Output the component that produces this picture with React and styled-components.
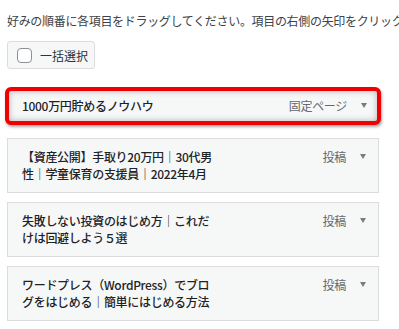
import React from "react";
import styled, { createGlobalStyle } from "styled-components";

const GlobalStyle = createGlobalStyle`
  body {
    margin: 0;
    background: #fff;
    font-family: "Noto Sans CJK JP", "Noto Sans", sans-serif;
    color: #1d2327;
  }
`;

const Page = styled.div`
  width: 399px;
  height: 329px;
  overflow: hidden;
  padding: 11px 0 0 7px;
  box-sizing: border-box;
`;

const Intro = styled.p`
  margin: 0;
  font-size: 12px;
  letter-spacing: -0.32px;
  line-height: 20px;
  white-space: nowrap;
  color: #3c434a;
`;

const BulkButton = styled.label`
  display: inline-flex;
  align-items: center;
  gap: 8px;
  margin-top: 10px;
  height: 28px;
  width: 88px;
  box-sizing: border-box;
  padding-left: 9px;
  border: 1px solid #dcdcde;
  border-radius: 3px;
  background: #f6f7f7;
  font-size: 12px;
  color: #2c3338;
`;

const Checkbox = styled.span`
  width: 15px;
  height: 15px;
  box-sizing: border-box;
  border: 1px solid #8c8f94;
  border-radius: 4px;
  background: #fff;
`;

const MenuList = styled.ul`
  list-style: none;
  margin: 18px 0 0;
  padding: 0;
  width: 372px;
  display: flex;
  flex-direction: column;
  gap: 9px;
`;

const MenuItem = styled.li`
  display: flex;
  align-items: flex-start;
  box-sizing: border-box;
  padding: 9px 12px 9px 14px;
  border: 1px solid #dcdcde;
  background: #f6f7f7;

  ${(p) =>
    p.$highlight &&
    `
    margin: 0 -2px 4px;
    padding: 6px 10px 6px 13px;
    border: 4px solid #f00000;
    border-radius: 6px;
    box-shadow: 1px 2px 3px rgba(0, 0, 0, 0.35), inset 0 0 6px rgba(0, 0, 0, 0.28);
  `}
`;

const Title = styled.span`
  flex: 0 0 192px;
  font-size: 12px;
  letter-spacing: -0.3px;
  line-height: 17.5px;
  font-weight: 500;
  color: #1d2327;
`;

const Type = styled.span`
  margin-left: auto;
  font-size: 12px;
  letter-spacing: -0.3px;
  line-height: 17.5px;
  color: #646970;
`;

const Arrow = styled.span`
  width: 0;
  height: 0;
  margin: 6px 0 0 14px;
  border-left: 3.5px solid transparent;
  border-right: 3.5px solid transparent;
  border-top: 5px solid #787c82;
`;

const items = [
  { title: "1000万円貯めるノウハウ", type: "固定ページ", highlight: true },
  { title: "【資産公開】手取り20万円｜30代男性｜学童保育の支援員｜2022年4月", type: "投稿" },
  { title: "失敗しない投資のはじめ方｜これだけは回避しよう５選", type: "投稿" },
  { title: "ワードプレス（WordPress）でブログをはじめる｜簡単にはじめる方法", type: "投稿" },
];

const App = () => {
  return (
    <Page>
      <GlobalStyle />
      <Intro>好みの順番に各項目をドラッグしてください。項目の右側の矢印をクリックすると設定を表示します。</Intro>
      <BulkButton>
        <Checkbox />
        一括選択
      </BulkButton>
      <MenuList>
        {items.map((item) => (
          <MenuItem key={item.title} $highlight={item.highlight}>
            <Title>{item.title}</Title>
            <Type>{item.type}</Type>
            <Arrow />
          </MenuItem>
        ))}
      </MenuList>
    </Page>
  );
};

export default App;
